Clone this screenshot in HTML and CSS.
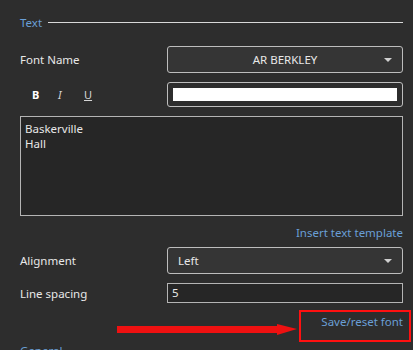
FILE: index.html
```html
<!DOCTYPE html>
<html lang="en">
<head>
    <meta charset="UTF-8">
    <title>Text settings</title>
    <link rel="stylesheet" href="styles.css">
</head>
<body>
    <div class="panel">
        <div class="section-title">
            <span>Text</span>
            <div class="rule"></div>
        </div>

        <div class="row first">
            <div class="label">Font Name</div>
            <div class="combo centered">
                <span>AR BERKLEY</span>
                <i class="caret"></i>
            </div>
        </div>

        <div class="row">
            <div class="styles">
                <span class="bold">B</span>
                <span class="italic">I</span>
                <span class="under">U</span>
            </div>
            <div class="color-box"><div class="swatch"></div></div>
        </div>

        <div class="textarea">Baskerville<br>Hall</div>

        <a class="link template">Insert text template</a>

        <div class="row align">
            <div class="label">Alignment</div>
            <div class="combo">
                <span>Left</span>
                <i class="caret"></i>
            </div>
        </div>

        <div class="row spacing">
            <div class="label">Line spacing</div>
            <div class="field">5</div>
        </div>

        <div class="save-wrap">
            <a class="link save">Save/reset font</a>
            <div class="mark-box"></div>
            <div class="mark-arrow"></div>
        </div>

        <div class="section-title next">
            <span>General</span>
        </div>
    </div>
</body>
</html>
```

FILE: styles.css
```css
body {
    margin: 0;
    padding: 0;
    background: #2d2d2d;
    font-family: "Noto Sans", "Open Sans", sans-serif;
    font-size: 11.5px;
    color: #e8e8e8;
    overflow: hidden;
    height: 350px;
}

.panel {
    padding: 14px 10px 0 20px;
}

.section-title {
    display: flex;
    align-items: center;
    gap: 6px;
    height: 16px;
    color: #6a9fd6;
}

.rule {
    flex: 1;
    height: 1px;
    background: #d8d8d8;
}

.row {
    display: grid;
    grid-template-columns: 147px 1fr;
    align-items: center;
    margin-top: 9px;
}

.row.first {
    margin-top: 16px;
}

.combo {
    height: 25px;
    border: 1px solid #bdbdbd;
    border-radius: 3px;
    background: #353535;
    display: flex;
    align-items: center;
    padding: 0 10px;
    position: relative;
}

.combo.centered {
    justify-content: center;
}

.caret {
    position: absolute;
    right: 10px;
    top: 11px;
    width: 0;
    height: 0;
    border-left: 4px solid transparent;
    border-right: 4px solid transparent;
    border-top: 4px solid #d0d0d0;
}

.styles {
    display: flex;
    padding-left: 12px;
}

.styles span {
    width: 26px;
    font-size: 11px;
}

.bold {
    font-weight: bold;
    color: #ffffff;
}

.italic {
    font-style: italic;
    color: #d6d6d6;
}

.under {
    text-decoration: underline;
    color: #d6d6d6;
}

.color-box {
    height: 25px;
    box-sizing: border-box;
    border: 1px solid #bdbdbd;
    border-radius: 3px;
    padding: 5px;
}

.swatch {
    height: 100%;
    background: #ffffff;
}

.textarea {
    margin-top: 9px;
    height: 100px;
    box-sizing: border-box;
    border: 1px solid #b4b4b4;
    background: #262626;
    padding: 4px 4px;
    line-height: 15px;
}

.link {
    display: block;
    text-align: right;
    color: #6a9fd6;
    line-height: 16px;
}

.template {
    margin-top: 9px;
}

.row.align {
    margin-top: 6px;
}

.field {
    height: 20px;
    box-sizing: border-box;
    border: 1px solid #b4b4b4;
    background: #262626;
    padding: 0 4px;
    line-height: 18px;
}

.save-wrap {
    position: relative;
    margin-top: 11px;
}

.mark-box {
    position: absolute;
    right: -8px;
    top: -4px;
    width: 108px;
    height: 28px;
    border: 2px solid #ff1010;
}

.mark-arrow {
    position: absolute;
    left: 97px;
    top: 12px;
    width: 160px;
    height: 7px;
    background: #ee1111;
}

.mark-arrow::after {
    content: "";
    position: absolute;
    right: -20px;
    top: -2px;
    border-top: 5px solid transparent;
    border-bottom: 6px solid transparent;
    border-left: 20px solid #ee1111;
}

.section-title.next {
    margin-top: 12px;
}
```
